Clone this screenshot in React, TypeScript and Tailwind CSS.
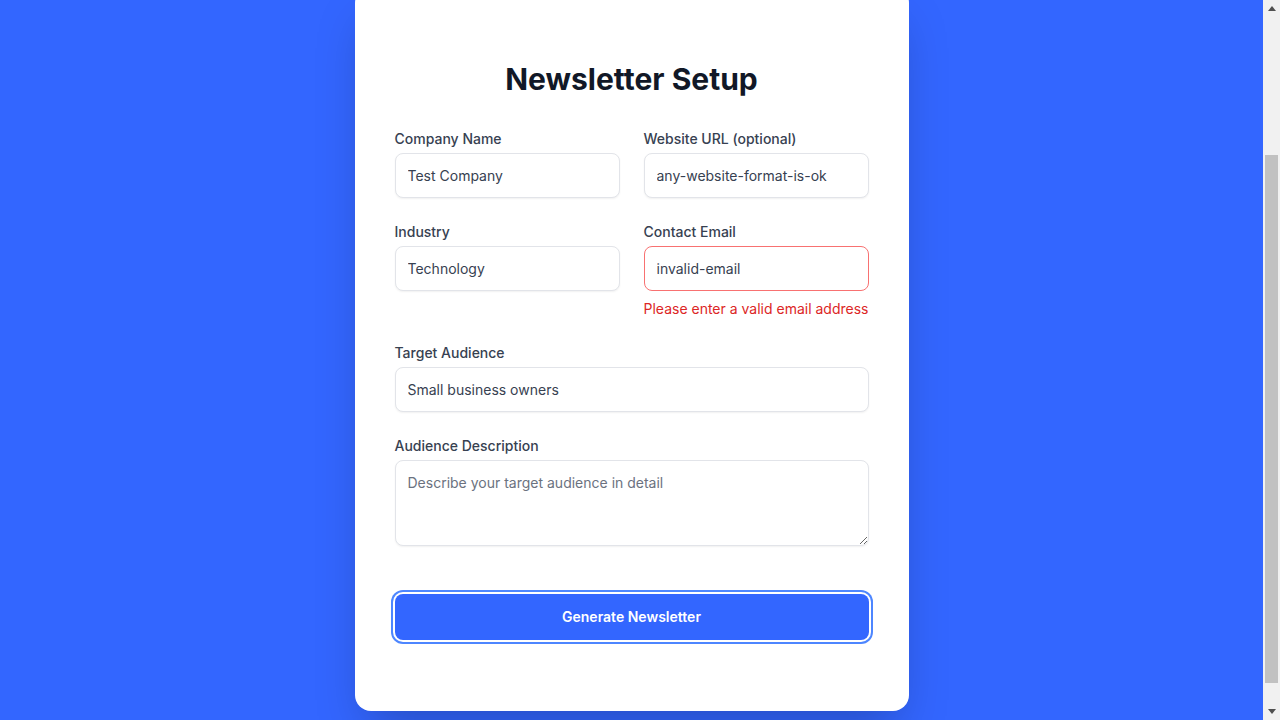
import React from "react";

const inputCls =
  "block w-full h-[45px] rounded-lg border border-[#e2e4e9] bg-white px-3 text-sm text-[#374151] shadow-[0_1px_2px_rgba(0,0,0,0.06)] outline-none placeholder:text-[#6b7280]";

function Field({
  label,
  value,
  error,
  className = "",
}: {
  label: string;
  value: string;
  error?: string;
  className?: string;
}) {
  return (
    <div className={className}>
      <label className="mb-1 block text-sm leading-5 font-medium text-[#374151]">{label}</label>
      <input
        readOnly
        value={value}
        className={
          error
            ? "block w-full h-[45px] rounded-lg border border-[#f87171] bg-white px-3 text-sm text-[#374151] outline-none"
            : inputCls
        }
      />
      {error && <p className="mt-2 text-sm leading-5 text-[#dc2626]">{error}</p>}
    </div>
  );
}

function Arrow({ up }: { up?: boolean }) {
  return (
    <div className="flex h-[17px] items-center justify-center">
      <svg width="8" height="5" viewBox="0 0 8 5">
        {up ? <path d="M0 5 L4 0 L8 5 Z" fill="#505050" /> : <path d="M0 0 L8 0 L4 5 Z" fill="#505050" />}
      </svg>
    </div>
  );
}

export default function App() {
  return (
    <div
      className="flex h-screen w-full overflow-hidden bg-[#3366ff]"
      style={{ fontFamily: "Inter, 'Noto Sans', sans-serif" }}
    >
      <div
        className="h-full flex-1 overflow-y-scroll [scrollbar-width:none]"
        ref={(el) => {
          if (el) el.scrollTop = 188;
        }}
      >
        <div className="pt-[175px] pb-[36px]">
          <div className="mx-auto w-[554px] rounded-2xl bg-white px-10 pt-[74px] pb-[71px] shadow-2xl">
            <h1 className="mb-8 text-center text-3xl leading-9 font-bold text-[#111827]">Newsletter Setup</h1>
            <div className="flex flex-col gap-6">
              <div className="grid grid-cols-2 items-start gap-x-6">
                <Field label="Company Name" value="Test Company" />
                <Field label="Website URL (optional)" value="any-website-format-is-ok" />
              </div>
              <div className="grid grid-cols-2 items-start gap-x-6">
                <Field label="Industry" value="Technology" />
                <Field label="Contact Email" value="invalid-email" error="Please enter a valid email address" />
              </div>
              <Field label="Target Audience" value="Small business owners" />
              <div>
                <label className="mb-1 block text-sm leading-5 font-medium text-[#374151]">
                  Audience Description
                </label>
                <textarea
                  readOnly
                  placeholder="Describe your target audience in detail"
                  className="block h-[86px] w-full rounded-lg border border-[#e2e4e9] bg-white px-3 py-[10px] text-sm leading-6 text-[#374151] shadow-[0_1px_2px_rgba(0,0,0,0.06)] outline-none placeholder:text-[#6b7280]"
                />
              </div>
            </div>
            <button className="mt-12 block h-[46px] w-full rounded-lg bg-[#3366ff] text-sm font-semibold text-white ring-2 ring-[#4d86ff] ring-offset-2 ring-offset-white">
              Generate Newsletter
            </button>
          </div>
        </div>
      </div>
      <div className="flex h-full w-[17px] flex-col bg-[#f1f1f1]">
        <Arrow up />
        <div className="h-[138px]" />
        <div className="mx-[2px] h-[528px] bg-[#c1c1c1]" />
        <div className="flex-1" />
        <Arrow />
      </div>
    </div>
  );
}
